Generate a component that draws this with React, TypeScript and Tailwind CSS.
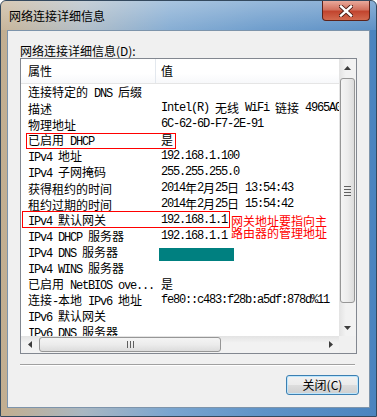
import React from 'react';

// Win7 "网络连接详细信息" dialog

const CJK = /[\u3000-\u9fff\uff00-\uffef]/;

// SimSun-like mix: CJK at 12px, latin half width (6px)
function Mixed({ t }: { t: string }) {
  const parts = t.split(/([\u3000-\u9fff\uff00-\uffef]+)/).filter(Boolean);
  return (
    <>
      {parts.map((p, i) =>
        CJK.test(p) ? (
          <span key={i} className="font-['Noto_Sans_CJK_SC',sans-serif] text-[12px]">
            {p}
          </span>
        ) : (
          <span key={i} className="font-['Liberation_Mono',monospace] text-[12px] tracking-[-1.2px]">
            {p}
          </span>
        )
      )}
    </>
  );
}

interface Row {
  name: string;
  value?: string;
  teal?: boolean;
}

const rows: Row[] = [
  { name: '连接特定的 DNS 后缀' },
  { name: '描述', value: 'Intel(R) 无线 WiFi 链接 4965AGN' },
  { name: '物理地址', value: '6C-62-6D-F7-2E-91' },
  { name: '已启用 DHCP', value: '是' },
  { name: 'IPv4 地址', value: '192.168.1.100' },
  { name: 'IPv4 子网掩码', value: '255.255.255.0' },
  { name: '获得租约的时间', value: '2014年2月25日 13:54:43' },
  { name: '租约过期的时间', value: '2014年2月25日 15:54:42' },
  { name: 'IPv4 默认网关', value: '192.168.1.1' },
  { name: 'IPv4 DHCP 服务器', value: '192.168.1.1' },
  { name: 'IPv4 DNS 服务器', teal: true },
  { name: 'IPv4 WINS 服务器' },
  { name: '已启用 NetBIOS ove...', value: '是' },
  { name: '连接-本地 IPv6 地址', value: 'fe80::c483:f28b:a5df:878d%11' },
  { name: 'IPv6 默认网关' },
  { name: 'IPv6 DNS 服务器' },
];

function Tri({ dir }: { dir: 'up' | 'down' | 'left' | 'right' }) {
  const pts = {
    up: '0,4 7,4 3.5,0',
    down: '0,0 7,0 3.5,4',
    left: '4,0 4,7 0,3.5',
    right: '0,0 0,7 4,3.5',
  }[dir];
  const vertical = dir === 'up' || dir === 'down';
  return (
    <svg width={vertical ? 7 : 4} height={vertical ? 4 : 7} viewBox={vertical ? '0 0 7 4' : '0 0 4 7'}>
      <polygon points={pts} fill="#3c3c3c" />
    </svg>
  );
}

export default function App() {
  return (
    <div className="w-[377px] h-[417px] flex flex-col rounded-t-[6px] border border-[#34495e] bg-[linear-gradient(90deg,#c3ae8f_0%,#a9b7c2_22%,#7aa5cf_45%,#5f93c7_70%,#4b84bf_100%)] overflow-hidden">
      {/* title bar */}
      <div className="h-[29px] flex items-start justify-between bg-[linear-gradient(180deg,rgba(255,255,255,0.35)_0%,rgba(255,255,255,0.1)_100%)]">
        <span className="pl-[8px] pt-[7px] text-[12px] leading-[16px] text-black font-['Noto_Sans_CJK_SC',sans-serif]">
          网络连接详细信息
        </span>
        <div className="mr-[6px] w-[48px] h-[20px] flex items-center justify-center rounded-b-[4px] border border-t-0 border-[#5d2219] bg-[linear-gradient(180deg,#e9a99b_0%,#d2725f_45%,#c2452f_55%,#d26a4f_100%)]">
          <svg width="14" height="12" viewBox="0 0 14 12">
            <path d="M2 1.5 L12 10.5 M12 1.5 L2 10.5" stroke="#4a1a12" strokeWidth="4.2" strokeLinecap="square" />
            <path d="M2 1.5 L12 10.5 M12 1.5 L2 10.5" stroke="#ffffff" strokeWidth="2.4" strokeLinecap="square" />
          </svg>
        </div>
      </div>

      {/* client area */}
      <div className="mx-[6px] h-[378px] flex flex-col bg-[#f0f0f0] border border-[#7d94ab] pl-[12px] pr-[11px]">
        <div className="pt-[12px] h-[27px] text-[12px] leading-[15px] text-black font-['Noto_Sans_CJK_SC',sans-serif]">
          网络连接详细信息(D):
        </div>

        {/* list view */}
        <div className="w-[337px] h-[296px] border border-[#828790] bg-white flex flex-col">
          <div className="flex h-[277px]">
            <div className="relative w-[318px] overflow-hidden">
              <div className="flex h-[25px] border-b border-[#e5e5e5] text-[12px] font-['Noto_Sans_CJK_SC',sans-serif] text-black bg-[linear-gradient(180deg,#ffffff_0%,#ffffff_60%,#f7f8fa_100%)]">
                <div className="w-[135px] shrink-0 pl-[7px] flex items-center border-r border-[#e3e8ee]">属性</div>
                <div className="pl-[5px] flex items-center">值</div>
              </div>
              <div className="flex flex-col">
                {rows.map((r) => (
                  <div key={r.name} className="flex h-[16px] items-center whitespace-pre text-black">
                    <div className="w-[140px] shrink-0 pl-[7px] leading-[16px]">
                      <Mixed t={r.name} />
                    </div>
                    <div className="leading-[16px] flex items-center">
                      {r.teal ? (
                        <div className="ml-[-2px] mt-[4px] w-[75px] h-[13px] bg-[#008080]" />
                      ) : r.value ? (
                        <Mixed t={r.value} />
                      ) : null}
                    </div>
                  </div>
                ))}
              </div>

              {/* annotations */}
              <div className="absolute left-[5px] top-[74px] w-[150px] h-[16px] border border-[#ff0000]" />
              <div className="absolute left-[1px] top-[152px] w-[208px] h-[17px] border border-[#ff0000]" />
              <div className="absolute left-[210px] top-[156px] text-[12px] leading-[12px] text-[#ff0000] font-['Noto_Sans_CJK_SC',sans-serif]">
                网关地址要指向主
                <br />
                路由器的管理地址
              </div>
            </div>

            {/* vertical scrollbar */}
            <div className="w-[17px] flex flex-col bg-[linear-gradient(90deg,#e3e3e3_0%,#f2f2f2_40%,#f2f2f2_100%)]">
              <div className="h-[17px] flex items-center justify-center">
                <Tri dir="up" />
              </div>
              <div className="h-[2px]" />
              <div className="mx-[1px] h-[225px] rounded-[3px] border border-[#969696] bg-[linear-gradient(90deg,#f4f4f4_0%,#ececec_50%,#dcdcdc_100%)] flex flex-col items-center justify-center gap-[2px]">
                <div className="w-[7px] h-[1px] bg-[#5f5f5f]" />
                <div className="w-[7px] h-[1px] bg-[#5f5f5f]" />
                <div className="w-[7px] h-[1px] bg-[#5f5f5f]" />
                <div className="w-[7px] h-[1px] bg-[#5f5f5f]" />
              </div>
              <div className="flex-1" />
              <div className="h-[17px] flex items-center justify-center">
                <Tri dir="down" />
              </div>
            </div>
          </div>

          {/* horizontal scrollbar */}
          <div className="flex h-[17px]">
            <div className="w-[318px] flex items-center bg-[linear-gradient(180deg,#e3e3e3_0%,#f2f2f2_40%,#f2f2f2_100%)]">
              <div className="w-[17px] h-[17px] flex items-center justify-center">
                <Tri dir="left" />
              </div>
              <div className="ml-[1px] w-[182px] h-[15px] rounded-[3px] border border-[#969696] bg-[linear-gradient(180deg,#f4f4f4_0%,#ececec_50%,#dcdcdc_100%)] flex items-center justify-center gap-[2px]">
                <div className="w-[1px] h-[7px] bg-[#5f5f5f]" />
                <div className="w-[1px] h-[7px] bg-[#5f5f5f]" />
                <div className="w-[1px] h-[7px] bg-[#5f5f5f]" />
              </div>
              <div className="flex-1" />
              <div className="w-[17px] h-[17px] flex items-center justify-center">
                <Tri dir="right" />
              </div>
            </div>
            <div className="w-[17px] bg-[#f0f0f0]" />
          </div>
        </div>

        {/* separator */}
        <div className="mt-[10px] w-[335px] h-[2px] border-t border-[#a0a0a0] border-b border-b-white" />

        {/* button */}
        <div className="mt-[9px] flex justify-end">
          <div className="w-[73px] h-[20px] mr-[-1px] rounded-[3px] border border-[#3c7fb1] shadow-[inset_0_0_0_1px_#bde6fd] bg-[linear-gradient(180deg,#f2f2f2_0%,#ebebeb_50%,#dddddd_51%,#cfcfcf_100%)] flex items-center justify-center text-[12px] leading-[16px] text-black font-['Noto_Sans_CJK_SC',sans-serif]">
            关闭(C)
          </div>
        </div>
      </div>
    </div>
  );
}
